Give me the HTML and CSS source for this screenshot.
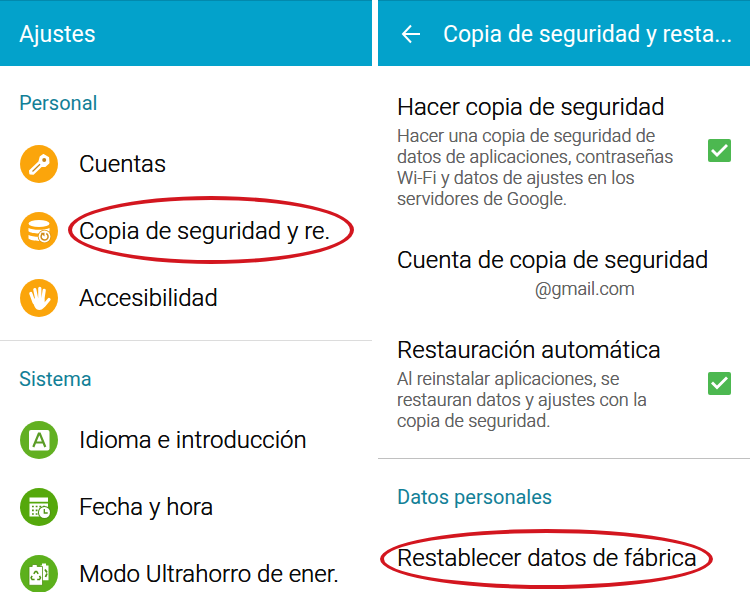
FILE: index.html
```
<!DOCTYPE html>
<html lang="es">
<head>
    <meta charset="UTF-8">
    <meta name="viewport" content="width=device-width, initial-scale=1.0">
    <title>Ajustes</title>
    <link rel="stylesheet" href="styles.css">
</head>
<body>
    <div class="screens">
        <!-- Settings list -->
        <main class="screen">
            <header class="app-bar">
                <h1>Ajustes</h1>
            </header>

            <h2 class="section-title">Personal</h2>
            <nav>
                <a class="row" href="#cuentas">
                    <svg class="icon" viewBox="0 0 38 38">
                        <circle cx="19" cy="19" r="19" fill="#fba50b"/>
                        <path d="M20.500 11.800l2.800-2 5 2.800.4 5.200-3.600 3.400-3.500-.200-8.300 8-3.200-.400-.3-2.800 9.400-9z" fill="#fff" stroke="#fff" stroke-width="1.600" stroke-linejoin="round"/>
                        <circle cx="24.200" cy="15" r="2" fill="#c68418"/>
                        <path d="M12.500 26.500l7.500-7.300" stroke="#c68418" stroke-width="1.200"/>
                    </svg>
                    <span>Cuentas</span>
                </a>
                <a class="row" href="#copia">
                    <svg class="icon" viewBox="0 0 38 38">
                        <circle cx="19" cy="19" r="19" fill="#fba50b"/>
                        <ellipse cx="19" cy="11.500" rx="10.500" ry="3.600" fill="#fff"/>
                        <path d="M8.500 16c4 2.400 17 2.400 21 0v3.300c-3 3-18 3-21 0z" fill="#fff"/>
                        <path d="M8.500 23c4 2.400 17 2.400 21 0v3.500c-3 3.200-18 3.200-21 0z" fill="#fff"/>
                        <circle cx="24.500" cy="24.500" r="6.800" fill="#e0960f"/>
                        <circle cx="24.500" cy="24.500" r="5.900" fill="#fff"/>
                        <path d="M22.300 21.900a3.500 3.500 0 1 0 4 -.4" fill="none" stroke="#cf8a18" stroke-width="1.500"/>
                        <path d="M20.500 20.800h4v3.800z" fill="#cf8a18"/>
                    </svg>
                    <span>Copia de seguridad y re.</span>
                    <i class="mark"></i>
                </a>
                <a class="row" href="#accesibilidad">
                    <svg class="icon" viewBox="0 0 38 38">
                        <circle cx="19" cy="19" r="19" fill="#fba50b"/>
                        <path d="M10.800 14.500l3.300 9M14.800 10.500l2 10M19.800 9.300v11M24.200 11.300l-1.500 10M29 20.500l-5 6" stroke="#fff" stroke-width="3.200" stroke-linecap="round"/>
                        <path d="M12.300 19.500h12l.5 4 2 .500c-2 4-4 7-7.300 7-4.500 0-5.500-4-7.200-11.500z" fill="#fff"/>
                    </svg>
                    <span>Accesibilidad</span>
                </a>
            </nav>

            <hr>

            <h2 class="section-title">Sistema</h2>
            <nav>
                <a class="row" href="#idioma">
                    <svg class="icon" viewBox="0 0 38 38">
                        <circle cx="19" cy="19" r="19" fill="#62b022"/>
                        <rect x="9" y="9" width="20.500" height="20.500" rx="2" fill="#fff"/>
                        <path d="M13.300 26l5.500-13.500h1L25.300 26M15.300 21.500h8" fill="none" stroke="#5a9c26" stroke-width="2.200"/>
                    </svg>
                    <span>Idioma e introducción</span>
                </a>
                <a class="row" href="#fecha">
                    <svg class="icon" viewBox="0 0 38 38">
                        <circle cx="19" cy="19" r="19" fill="#55a80c"/>
                        <path d="M9.500 9.500h18.500v4.200H9.500zM9.500 15.500h18.500v13H9.500z" fill="#fff"/>
                        <path d="M12 18.500h14M12 22.300h9M12 26h7" stroke="#4f9213" stroke-width="1.700" stroke-dasharray="1.800 1.900"/>
                        <circle cx="24.500" cy="24.500" r="6.600" fill="#4f9213"/>
                        <circle cx="24.500" cy="24.500" r="5.500" fill="#fff"/>
                        <path d="M24.300 21v4h3.400" fill="none" stroke="#4f9213" stroke-width="1.300"/>
                    </svg>
                    <span>Fecha y hora</span>
                </a>
                <a class="row" href="#ultrahorro">
                    <svg class="icon" viewBox="0 0 38 38">
                        <circle cx="19" cy="19" r="19" fill="#5cb01c"/>
                        <path d="M20.500 10.500h1.500v-2h4v2h2.500v14.800h-8z" fill="#fff"/>
                        <path d="M25 14.500l2 3M25.500 22l1.500-3.500" stroke="#4f9213" stroke-width="1.800"/>
                        <path d="M9 11.500h3.200v-2h5v2h5.300v18.800H9z" fill="#fff" stroke="#4f9213" stroke-width=".8"/>
                        <path d="M13.800 18.800l1.500-2.300h1.400l1.500 2.300M19.500 20.800l1 2-1 1.800h-2.300M14.600 24.600h-2.500l-1-1.800 1-2" fill="none" stroke="#4f9213" stroke-width="1.500"/>
                    </svg>
                    <span>Modo Ultrahorro de ener.</span>
                </a>
            </nav>
        </main>

        <!-- Backup and reset -->
        <section class="screen">
            <header class="app-bar">
                <button type="button" class="back" aria-label="Atrás">
                    <svg viewBox="0 0 20 20">
                        <path d="M10 1.500L2 10l8 8.500M2 10h17" fill="none" stroke="#fff" stroke-width="2"/>
                    </svg>
                </button>
                <h1>Copia de seguridad y resta...</h1>
            </header>

            <div class="options">
                <div class="option">
                    <label for="backup">
                        <span class="option-name">Hacer copia de seguridad</span>
                        <span class="option-text">Hacer una copia de seguridad de datos de aplicaciones, contraseñas Wi-Fi y datos de ajustes en los servidores de Google.</span>
                    </label>
                    <input type="checkbox" id="backup" checked>
                </div>
                <a class="option" href="#cuenta">
                    <span>
                        <span class="option-name">Cuenta de copia de seguridad</span>
                        <span class="option-text account">@gmail.com</span>
                    </span>
                </a>
                <div class="option">
                    <label for="restore">
                        <span class="option-name">Restauración automática</span>
                        <span class="option-text">Al reinstalar aplicaciones, se restauran datos y ajustes con la copia de seguridad.</span>
                    </label>
                    <input type="checkbox" id="restore" checked>
                </div>
            </div>

            <hr class="dark">

            <h2 class="section-title">Datos personales</h2>
            <a class="row" href="#restablecer">
                <span>Restablecer datos de fábrica</span>
                <i class="mark mark-wide"></i>
            </a>
        </section>
    </div>
</body>
</html>
```
FILE: styles.css
```
:root {
    --bar-color: #03a2cb;
    --title-color: #127f97;
    --text-color: #0a0a0a;
    --muted-color: #606060;
    --mark-color: #d3161f;
}

* {
    box-sizing: border-box;
}

body {
    margin: 0;
    font-family: Roboto, "Liberation Sans", sans-serif;
    background-color: #ffffff;
    color: var(--text-color);
}

a {
    color: inherit;
    text-decoration: none;
}

.screens {
    display: grid;
    grid-template-columns: 1fr 1fr;
    gap: 6px;
    height: 100vh;
    overflow: hidden;
}

.screen {
    min-width: 0;
}

.app-bar {
    display: flex;
    align-items: center;
    height: 66px;
    padding: 1px 19px 0;
    background-color: var(--bar-color);
    border-top: 1px solid #0289ad;
    color: #ffffff;
}

.app-bar h1 {
    margin: 0;
    font-size: 23px;
    font-weight: 400;
    white-space: nowrap;
}

.back {
    flex: none;
    width: 20px;
    height: 20px;
    margin: 0 22px 0 4px;
    padding: 0;
    border: none;
    background: none;
    cursor: pointer;
}

.back svg {
    display: block;
    width: 20px;
    height: 20px;
}

.section-title {
    margin: 0;
    padding: 25px 19px 15px;
    font-size: 20px;
    line-height: 24px;
    font-weight: 400;
    color: var(--title-color);
}

.row {
    position: relative;
    display: flex;
    align-items: center;
    gap: 20px;
    height: 67px;
    padding: 0 19px;
    font-size: 24px;
    white-space: nowrap;
}

/* Light weight, firmed up a little so it stays readable */
.row,
.option-name,
.option-text {
    font-weight: 300;
    text-shadow: 0 0 0 currentColor;
}

.icon {
    width: 40px;
    height: 38px;
    flex: none;
}

/* Red oval drawn over a row */
.mark {
    position: absolute;
    top: -1px;
    left: 68px;
    width: 286px;
    height: 68px;
    border: 4px solid var(--mark-color);
    border-radius: 50%;
}

.mark-wide {
    top: 5px;
    left: 2px;
    width: 333px;
    height: 60px;
}

hr {
    height: 1px;
    margin: 9px 0 1px;
    border: none;
    background-color: #dcdcdc;
}

hr.dark {
    background-color: #c0c0c0;
}

.options {
    padding-top: 8px;
}

.option {
    display: flex;
    align-items: center;
    justify-content: space-between;
    padding: 18px 19px;
}

.option label {
    max-width: 290px;
}

.option-name,
.option-text {
    display: block;
}

.option-name {
    font-size: 24px;
    line-height: 30px;
    white-space: nowrap;
}

.option-text {
    margin-top: 3px;
    font-size: 18px;
    line-height: 21px;
    color: var(--muted-color);
}

.account {
    padding-left: 138px;
}

input[type="checkbox"] {
    appearance: none;
    flex: none;
    width: 23px;
    height: 23px;
    margin: 0;
    border-radius: 2px;
    background-color: #4cb850;
}

input[type="checkbox"]:checked::before {
    content: "";
    display: block;
    width: 23px;
    height: 23px;
    background-color: #ffffff;
    clip-path: polygon(3px 12px, 5px 10px, 9px 14px, 18px 5px, 20px 7px, 9px 18px);
}
```
